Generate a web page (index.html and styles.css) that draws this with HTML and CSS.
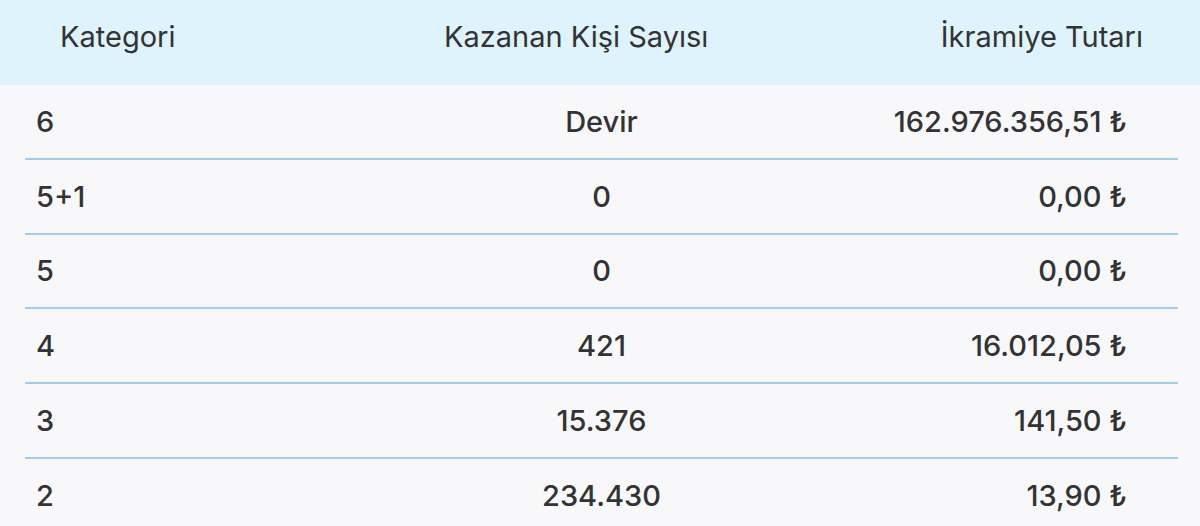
FILE: index.html
```html
<!DOCTYPE html>
<html lang="tr">
<head>
<meta charset="utf-8">
<link rel="stylesheet" href="styles.css">
</head>
<body>
<div class="page">
  <div class="head">
    <div class="h-cat">Kategori</div>
    <div class="h-mid">Kazanan Kişi Sayısı</div>
    <div class="h-amt">İkramiye Tutarı</div>
  </div>
  <div class="rows">
    <div class="row"><div class="c-cat">6</div><div class="c-mid">Devir</div><div class="c-amt">162.976.356,51 ₺</div></div>
    <div class="row"><div class="c-cat">5+1</div><div class="c-mid">0</div><div class="c-amt">0,00 ₺</div></div>
    <div class="row"><div class="c-cat">5</div><div class="c-mid">0</div><div class="c-amt">0,00 ₺</div></div>
    <div class="row"><div class="c-cat">4</div><div class="c-mid">421</div><div class="c-amt">16.012,05 ₺</div></div>
    <div class="row"><div class="c-cat">3</div><div class="c-mid">15.376</div><div class="c-amt">141,50 ₺</div></div>
    <div class="row"><div class="c-cat">2</div><div class="c-mid">234.430</div><div class="c-amt">13,90 ₺</div></div>
  </div>
</div>
</body>
</html>
```
FILE: styles.css
```css
html, body {
  margin: 0;
  padding: 0;
  background: #f8f8fa;
}
body {
  font-family: "Inter", "DejaVu Sans", sans-serif;
  color: #333333;
  overflow: hidden;
}
.page {
  width: 1200px;
  height: 526px;
  overflow: hidden;
}
.head {
  height: 85px;
  background: #dff3fd;
  display: grid;
  grid-template-columns: 384px 262px 1fr;
  align-items: center;
  padding: 0 57px 12px 60px;
  box-sizing: border-box;
  font-size: 29px;
  font-weight: 400;
}
.h-mid { text-align: center; white-space: nowrap; }
.h-amt { text-align: right; }
.rows {
  margin: 0 22px 0 25px;
}
.row {
  height: 72.8px;
  border-bottom: 2px solid #9dcfee;
  display: grid;
  grid-template-columns: 1fr 1fr 1fr;
  align-items: center;
  font-size: 29px;
  font-weight: 500;
}
.c-cat { padding-left: 11px; }
.c-mid { text-align: center; }
.c-amt { text-align: right; padding-right: 51px; }
```
